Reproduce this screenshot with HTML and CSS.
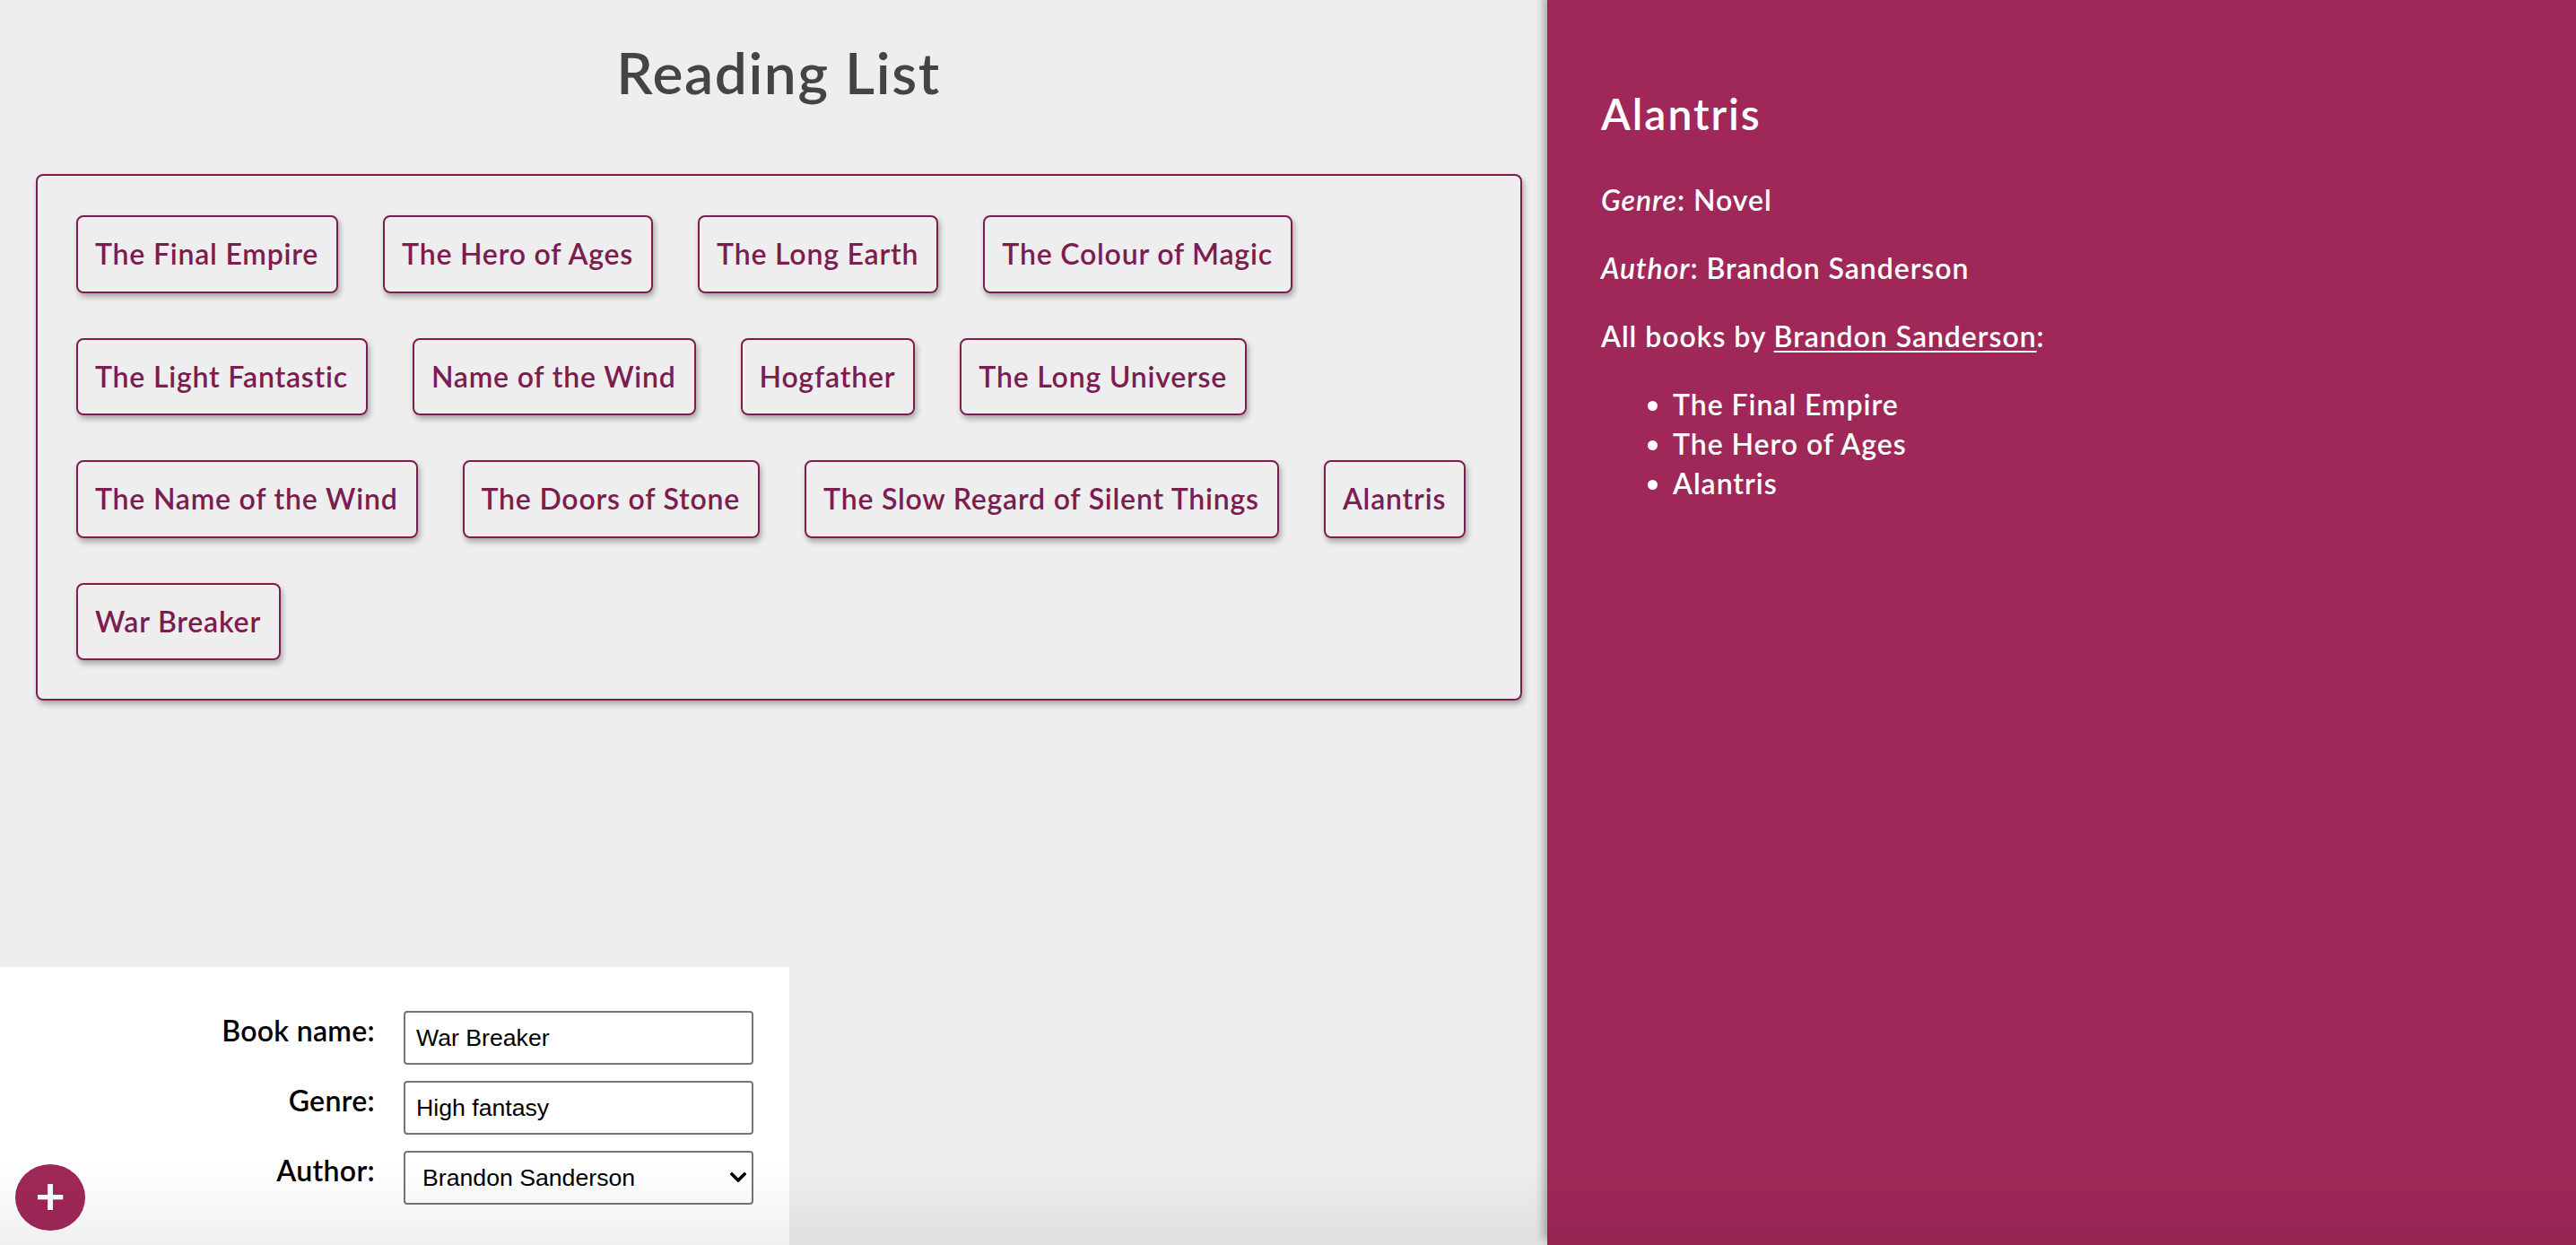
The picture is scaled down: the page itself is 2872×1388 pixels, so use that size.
FILE: index.html
```html
<!DOCTYPE html>
<html lang="en">
<head>
<meta charset="utf-8">
<title>Reading List</title>
<link rel="stylesheet" href="styles.css">
</head>
<body>
<div class="app">
  <main class="main">
    <h1 class="title">Reading List</h1>
    <ul class="book-list">
      <li class="book">The Final Empire</li>
      <li class="book">The Hero of Ages</li>
      <li class="book">The Long Earth</li>
      <li class="book">The Colour of Magic</li>
      <li class="book">The Light Fantastic</li>
      <li class="book">Name of the Wind</li>
      <li class="book">Hogfather</li>
      <li class="book">The Long Universe</li>
      <li class="book">The Name of the Wind</li>
      <li class="book">The Doors of Stone</li>
      <li class="book">The Slow Regard of Silent Things</li>
      <li class="book">Alantris</li>
      <li class="book">War Breaker</li>
    </ul>
    <form class="add-book">
      <div class="field">
        <label class="field-label">Book name:</label>
        <input class="field-input" type="text" value="War Breaker">
      </div>
      <div class="field">
        <label class="field-label">Genre:</label>
        <input class="field-input" type="text" value="High fantasy">
      </div>
      <div class="field">
        <label class="field-label">Author:</label>
        <div class="select-wrap">
          <select class="field-select"><option>Brandon Sanderson</option></select>
          <svg class="chevron" width="18" height="11" viewBox="0 0 18 11"><path d="M2 2 L9 9 L16 2" fill="none" stroke="#000" stroke-width="3.6" stroke-linecap="square"/></svg>
        </div>
      </div>
      <button class="add-btn" type="button">+</button>
    </form>
  </main>
  <aside class="details">
    <h2 class="details-title">Alantris</h2>
    <p class="details-line"><em>Genre</em>: Novel</p>
    <p class="details-line"><em>Author</em>: Brandon Sanderson</p>
    <p class="details-line">All books by <a class="author-link" href="#">Brandon Sanderson</a>:</p>
    <ul class="other-books">
      <li>The Final Empire</li>
      <li>The Hero of Ages</li>
      <li>Alantris</li>
    </ul>
  </aside>
</div>
<div class="bottom-shade"></div>
</body>
</html>
```
FILE: styles.css
```css
* { box-sizing: border-box; }
html, body { margin: 0; height: 100%; }
body {
  background: #eee;
  font-family: Lato, "Noto Sans", sans-serif;
  font-weight: 600;
  letter-spacing: 0.02em;
  overflow: hidden;
}
.app { display: flex; height: 100vh; }
.main {
  flex: 0 0 1725px;
  display: flex;
  flex-direction: column;
  min-width: 0;
}
.title {
  margin: 0 0 69px;
  padding: 37px 5px 0 16px;
  font-size: 64px;
  line-height: 88px;
  font-weight: 600;
  letter-spacing: 0.025em;
  color: #444;
  text-align: center;
}
.book-list {
  list-style: none;
  margin: 0 28px 0 40px;
  padding: 44px 0 43px 43px;
  border: 2px solid #7c1c4f;
  border-radius: 8px;
  box-shadow: 2px 4px 6px rgba(0,0,0,0.3);
  display: flex;
  flex-wrap: wrap;
  gap: 50px;
}
.book {
  padding: 20px 20px 20px 19px;
  font-size: 32px;
  line-height: 42.5px;
  letter-spacing: 0.025em;
  color: #7c1c4f;
  border: 2px solid #7c1c4f;
  border-radius: 8px;
  box-shadow: 2px 4px 6px rgba(0,0,0,0.3);
  white-space: nowrap;
}
.add-book {
  position: relative;
  margin-top: auto;
  align-self: flex-start;
  width: 880px;
  background: #fff;
  padding: 40px 40px 36px;
}
.field {
  display: grid;
  grid-template-columns: 390px 390px;
  column-gap: 20px;
}
.field-label {
  padding: 9px 12px;
  text-align: right;
  font-size: 32px;
  line-height: 43.6px;
  color: #000;
}
.field-input, .field-select {
  display: block;
  width: 100%;
  height: 60px;
  border: 2px solid #767676;
  border-radius: 4px;
  background: #fff;
  color: #000;
  font-family: "Liberation Sans", Arial, sans-serif;
  font-size: 26.67px;
  font-weight: 400;
  letter-spacing: 0;
}
.field-input { margin: 9px 0; padding: 0 12px; }
.select-wrap { position: relative; margin: 9px 0; }
.field-select {
  appearance: none;
  -webkit-appearance: none;
  padding: 0 50px 0 19px;
}
.chevron {
  position: absolute;
  right: 8px;
  top: 24px;
  pointer-events: none;
}
.add-btn {
  position: absolute;
  left: 17px;
  bottom: 16px;
  width: 78px;
  height: 74px;
  border: 0;
  border-radius: 50%;
  background: #a02858;
  color: #fff;
  font-family: Lato, sans-serif;
  font-weight: 700;
  font-size: 58px;
  line-height: 1;
  letter-spacing: 0;
  display: flex;
  align-items: center;
  justify-content: center;
  padding: 0 0 6px;
}
.details {
  flex: 1 1 auto;
  position: relative;
  z-index: 1;
  background: #a02858;
  color: #fff;
  padding: 60px;
  box-shadow: -4px -6px 10px rgba(0,0,0,0.3);
  font-size: 32px;
  letter-spacing: 0.03em;
}
.details-title {
  margin: 34px 0 42px;
  font-size: 48px;
  line-height: 65px;
  font-weight: 600;
  letter-spacing: 0.04em;
}
.details-line {
  margin: 0 0 32px;
  line-height: 44px;
}
.author-link { color: #fff; text-decoration: underline; text-decoration-thickness: 2px; text-underline-offset: 4px; }
.other-books {
  margin: 0;
  padding-left: 80px;
  line-height: 44px;
}
.bottom-shade {
  position: fixed;
  left: 0;
  right: 0;
  bottom: 0;
  height: 90px;
  background: linear-gradient(to bottom, rgba(0,0,0,0), rgba(0,0,0,0.06));
  pointer-events: none;
  z-index: 5;
}
```
